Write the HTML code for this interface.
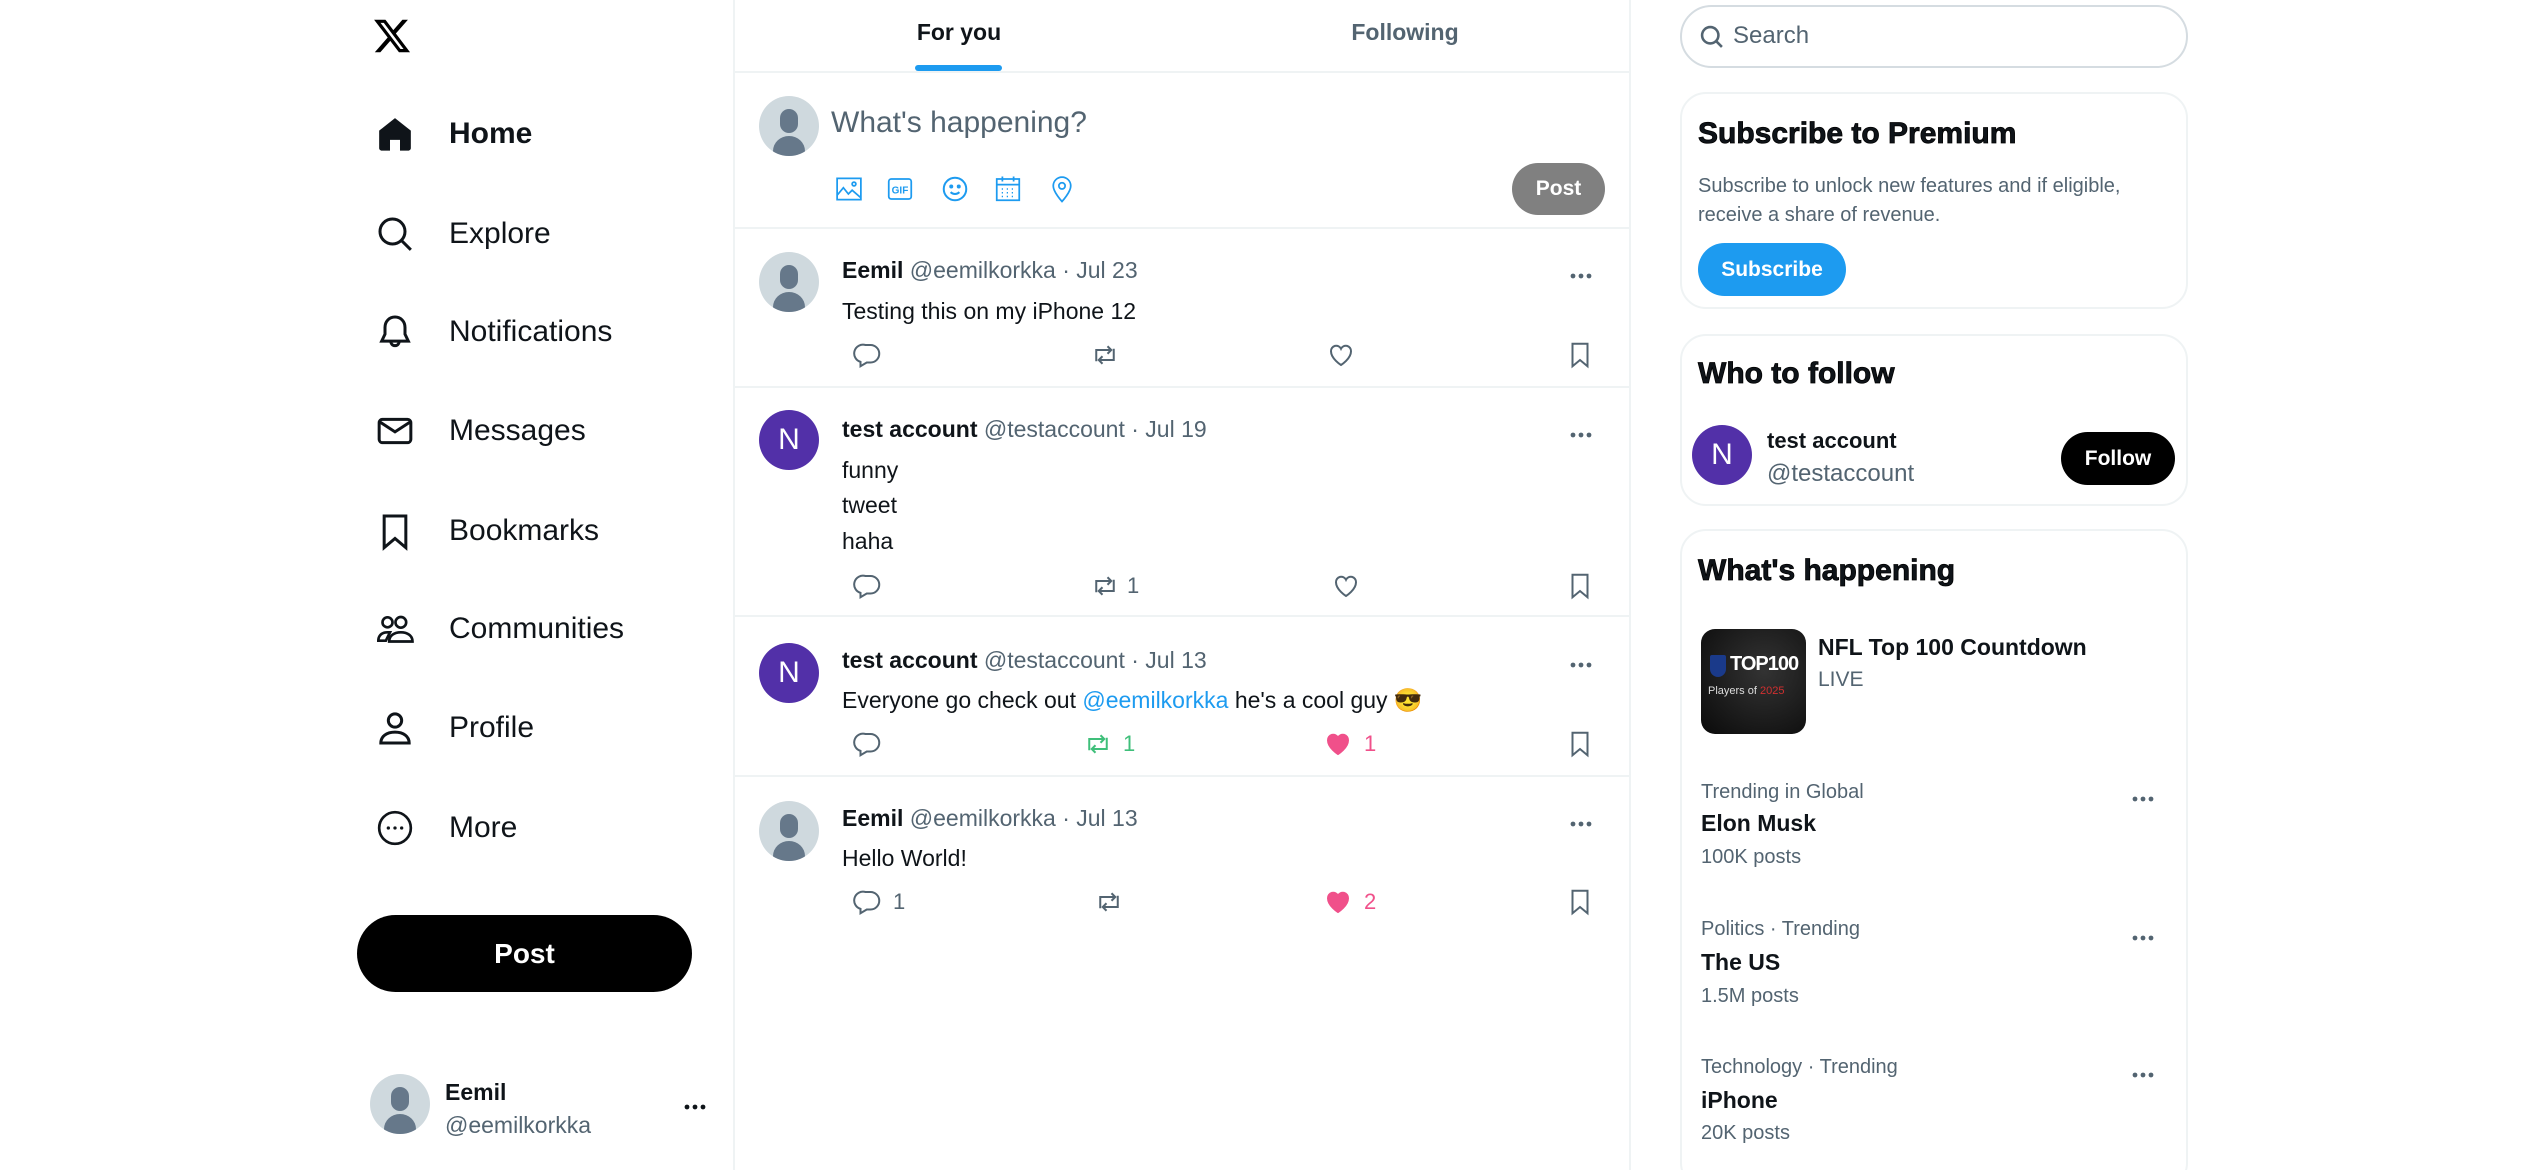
<!DOCTYPE html>
<html><head><meta charset="utf-8"><style>
*{margin:0;padding:0;box-sizing:border-box}
html{width:2530px;height:1170px;overflow:hidden}
body{width:2530px;height:1170px;background:#fff;font-family:"Liberation Sans",Arial,sans-serif;color:#0f1419;position:relative;overflow:hidden}
.a{position:absolute;white-space:nowrap}
.g{color:#536471}
.nav{position:absolute;left:449px;font-size:30px;line-height:30px}
.ni{position:absolute;left:375px;width:40px;height:40px}
.av{position:absolute;width:60px;height:60px;border-radius:50%;background:#cfd9de;overflow:hidden}
.av::before{content:"";position:absolute;left:21px;top:13px;width:18px;height:24px;border-radius:9px;background:#66788a}
.av::after{content:"";position:absolute;left:14px;top:40px;width:32px;height:30px;border-radius:50%;background:#66788a}
.avn{position:absolute;width:60px;height:60px;border-radius:50%;background:#5230a8;color:#fff;font-size:30px;line-height:60px;text-align:center}
.t{font-size:23px;line-height:24px}
.hl{position:absolute;left:734px;width:896px;height:2px;background:#eff3f4}
.card{position:absolute;left:1680px;width:508px;border:2px solid #eff3f4;border-radius:26px}
.h{font-size:30px;line-height:30px;font-weight:900;-webkit-text-stroke:0.8px #000}
.ic{position:absolute;width:30px;height:30px}
.d{position:absolute;width:24px;height:6px}
</style></head><body>

<svg width="0" height="0" style="position:absolute"><defs>
<g id="dt"><circle cx="4" cy="3" r="2.4"/><circle cx="12" cy="3" r="2.4"/><circle cx="20" cy="3" r="2.4"/></g>
<g id="rep"><path d="M10 4h4a7 7 0 010 14h-3l-5 3v-3.5A7 7 0 0110 4z" fill="none" stroke="currentColor" stroke-width="1.6"/></g>
<g id="rt" fill="none" stroke="currentColor" stroke-width="1.6"><path d="M5 17V8h12M14 5l3 3-3 3"/><path d="M19 7v9H7M10 19l-3-3 3-3"/></g>
<g id="lk"><path d="M12 20s-8-5-8-11a4.2 4.2 0 018-2 4.2 4.2 0 018 2c0 6-8 11-8 11z" stroke="currentColor" stroke-width="1.6"/></g>
<g id="bm"><path d="M6 3h12v18l-6-5-6 5z" fill="none" stroke="currentColor" stroke-width="1.6"/></g>
</defs></svg>

<!-- left sidebar -->
<svg class="a" style="left:372px;top:16px;width:40px;height:40px" viewBox="0 0 24 24"><path fill="#000" d="M18.244 2.25h3.308l-7.227 8.26 8.502 11.24H16.17l-5.214-6.817L4.99 21.75H1.68l7.73-8.835L1.254 2.25H8.08l4.713 6.231zm-1.161 17.52h1.833L7.084 4.126H5.117z"/></svg>

<svg class="ni" style="top:114px" viewBox="0 0 24 24"><path fill="#0f1419" d="M12 2.5 2.5 10v10.5c0 .8.7 1.5 1.5 1.5h5v-6.5h6V22h5c.8 0 1.5-.7 1.5-1.5V10z"/></svg>
<div class="nav" style="top:119px;font-weight:bold">Home</div>
<svg class="ni" style="top:214px" viewBox="0 0 24 24" fill="none" stroke="#0f1419" stroke-width="1.8"><circle cx="10.5" cy="10.5" r="7.5"/><path d="M16 16l5.5 5.5"/></svg>
<div class="nav" style="top:219px">Explore</div>
<svg class="ni" style="top:312px" viewBox="0 0 24 24" fill="none" stroke="#0f1419" stroke-width="1.8"><path d="M12 3c-3.5 0-6 2.7-6 6.3v4L4 17.5h16L18 13.3v-4C18 5.7 15.5 3 12 3z"/><path d="M9.5 17.5c0 1.6 1.1 2.7 2.5 2.7s2.5-1.1 2.5-2.7"/></svg>
<div class="nav" style="top:317px">Notifications</div>
<svg class="ni" style="top:411px" viewBox="0 0 24 24" fill="none" stroke="#0f1419" stroke-width="1.8"><rect x="2.5" y="5" width="19" height="14" rx="2"/><path d="M2.8 6.5 12 12.5l9.2-6"/></svg>
<div class="nav" style="top:416px">Messages</div>
<svg class="ni" style="top:511px" viewBox="0 0 24 24" fill="none" stroke="#0f1419" stroke-width="1.8"><path d="M5.5 3h13v19L12 16.5 5.5 22z"/></svg>
<div class="nav" style="top:516px">Bookmarks</div>
<svg class="ni" style="top:609px" viewBox="0 0 24 24" fill="none" stroke="#0f1419" stroke-width="1.6"><circle cx="7.5" cy="8" r="3"/><circle cx="15.5" cy="8" r="3.2"/><path d="M2 19c0-3 2-5 5.5-5H9l-2.5 5z"/><path d="M8.5 19.5c0-3.5 3-5.5 7-5.5s7 2 7 5.5z"/></svg>
<div class="nav" style="top:614px">Communities</div>
<svg class="ni" style="top:708px" viewBox="0 0 24 24" fill="none" stroke="#0f1419" stroke-width="1.8"><circle cx="12" cy="7.5" r="4"/><path d="M3.5 21c0-4 3.5-6.5 8.5-6.5s8.5 2.5 8.5 6.5z"/></svg>
<div class="nav" style="top:713px">Profile</div>
<svg class="ni" style="top:808px" viewBox="0 0 24 24" fill="none" stroke="#0f1419" stroke-width="1.6"><circle cx="12" cy="12" r="9.5"/><circle cx="8" cy="12" r="1" fill="#0f1419" stroke="none"/><circle cx="12" cy="12" r="1" fill="#0f1419" stroke="none"/><circle cx="16" cy="12" r="1" fill="#0f1419" stroke="none"/></svg>
<div class="nav" style="top:813px">More</div>

<div class="a" style="left:357px;top:915px;width:335px;height:77px;border-radius:39px;background:#000;color:#fff;font-size:28px;font-weight:bold;line-height:77px;text-align:center">Post</div>

<div class="av" style="left:370px;top:1074px"></div>
<div class="a t" style="left:445px;top:1080px;font-weight:bold">Eemil</div>
<div class="a t g" style="left:445px;top:1113px">@eemilkorkka</div>
<svg class="d" style="left:683px;top:1104px;fill:#0f1419" viewBox="0 0 24 6"><use href="#dt"/></svg>

<!-- center column -->
<div class="a" style="left:733px;top:0;width:2px;height:1170px;background:#eff3f4"></div>
<div class="a" style="left:1629px;top:0;width:2px;height:1170px;background:#eff3f4"></div>
<div class="a t" style="left:914px;top:20px;width:90px;text-align:center;font-weight:bold">For you</div>
<div class="a t g" style="left:1300px;top:20px;width:210px;text-align:center;font-weight:bold">Following</div>
<div class="a" style="left:915px;top:65px;width:87px;height:6px;border-radius:3px;background:#1d9bf0"></div>
<div class="hl" style="top:71px"></div>

<div class="av" style="left:759px;top:96px"></div>
<div class="a g" style="left:831px;top:108px;font-size:30px;line-height:30px">What's happening?</div>
<svg class="ic" style="left:834px;top:174px" viewBox="0 0 24 24" fill="none" stroke="#1d9bf0" stroke-width="1.4"><rect x="2.5" y="3.5" width="19" height="17"/><path d="M2.5 17l5-6 4 5 3-3 7 6"/><circle cx="16" cy="8" r="1.5"/></svg>
<svg class="ic" style="left:885px;top:174px" viewBox="0 0 24 24" fill="none" stroke="#1d9bf0" stroke-width="1.4"><rect x="3" y="4" width="18" height="16" rx="2"/><text x="12" y="15.5" font-size="8" font-family="Liberation Sans" text-anchor="middle" fill="#1d9bf0" stroke="none" font-weight="bold">GIF</text></svg>
<svg class="ic" style="left:940px;top:174px" viewBox="0 0 24 24" fill="none" stroke="#1d9bf0" stroke-width="1.6"><circle cx="12" cy="12" r="9"/><circle cx="9" cy="10" r="0.8" fill="#1d9bf0"/><circle cx="15" cy="10" r="0.8" fill="#1d9bf0"/><path d="M8.5 14.5c2 2 5 2 7 0"/></svg>
<svg class="ic" style="left:993px;top:174px" viewBox="0 0 24 24" fill="none" stroke="#1d9bf0" stroke-width="1.4"><rect x="3" y="4" width="18" height="17"/><path d="M3 8.5h18M7.5 2v4M16.5 2v4"/><path d="M7 12h1M11 12h1M15 12h1M7 15h1M11 15h1M15 15h1M7 18h1M11 18h1M15 18h1" stroke-width="1.2"/></svg>
<svg class="ic" style="left:1047px;top:174px" viewBox="0 0 24 24" fill="none" stroke="#1d9bf0" stroke-width="1.4"><path d="M12 22s-7-7.5-7-12.5a7 7 0 0114 0C19 14.5 12 22 12 22z"/><circle cx="12" cy="9.5" r="2.5"/></svg>
<div class="a" style="left:1512px;top:163px;width:93px;height:52px;border-radius:26px;background:#808080;color:#fff;font-size:21px;font-weight:bold;line-height:52px;text-align:center">Post</div>
<div class="hl" style="top:227px"></div>

<!-- tweet1 -->
<div class="av" style="left:759px;top:252px"></div>
<div class="a t" style="left:842px;top:258px"><b>Eemil</b> <span class="g">@eemilkorkka · Jul 23</span></div>
<svg class="d" style="left:1569px;top:273px;fill:#536471" viewBox="0 0 24 6"><use href="#dt"/></svg>
<div class="a t" style="left:842px;top:299px">Testing this on my iPhone 12</div>
<div class="hl" style="top:386px"></div>
<!-- tweet2 -->
<div class="avn" style="left:759px;top:410px">N</div>
<div class="a t" style="left:842px;top:417px"><b>test account</b> <span class="g">@testaccount · Jul 19</span></div>
<svg class="d" style="left:1569px;top:432px;fill:#536471" viewBox="0 0 24 6"><use href="#dt"/></svg>
<div class="a t" style="left:842px;top:458px">funny</div>
<div class="a t" style="left:842px;top:493px">tweet</div>
<div class="a t" style="left:842px;top:529px">haha</div>
<div class="hl" style="top:615px"></div>
<!-- tweet3 -->
<div class="avn" style="left:759px;top:643px">N</div>
<div class="a t" style="left:842px;top:648px"><b>test account</b> <span class="g">@testaccount · Jul 13</span></div>
<svg class="d" style="left:1569px;top:662px;fill:#536471" viewBox="0 0 24 6"><use href="#dt"/></svg>
<div class="a t" style="left:842px;top:688px">Everyone go check out <span style="color:#1d9bf0">@eemilkorkka</span> he's a cool guy 😎</div>
<div class="hl" style="top:775px"></div>
<!-- tweet4 -->
<div class="av" style="left:759px;top:801px"></div>
<div class="a t" style="left:842px;top:806px"><b>Eemil</b> <span class="g">@eemilkorkka · Jul 13</span></div>
<svg class="d" style="left:1569px;top:821px;fill:#536471" viewBox="0 0 24 6"><use href="#dt"/></svg>
<div class="a t" style="left:842px;top:846px">Hello World!</div>

<!-- action rows -->
<svg class="ic" style="left:853px;top:340px;color:#536471" viewBox="0 0 24 24"><use href="#rep"/></svg>
<svg class="ic" style="left:1090px;top:340px;color:#536471" viewBox="0 0 24 24"><use href="#rt"/></svg>
<svg class="ic" style="left:1326px;top:340px;color:#536471" viewBox="0 0 24 24"><use href="#lk" fill="none"/></svg>
<svg class="ic" style="left:1565px;top:340px;color:#536471" viewBox="0 0 24 24"><use href="#bm"/></svg>

<svg class="ic" style="left:853px;top:571px;color:#536471" viewBox="0 0 24 24"><use href="#rep"/></svg>
<svg class="ic" style="left:1090px;top:571px;color:#536471" viewBox="0 0 24 24"><use href="#rt"/></svg>
<div class="a g" style="left:1127px;top:575px;font-size:22px;line-height:22px">1</div>
<svg class="ic" style="left:1331px;top:571px;color:#536471" viewBox="0 0 24 24"><use href="#lk" fill="none"/></svg>
<svg class="ic" style="left:1565px;top:571px;color:#536471" viewBox="0 0 24 24"><use href="#bm"/></svg>

<svg class="ic" style="left:853px;top:729px;color:#536471" viewBox="0 0 24 24"><use href="#rep"/></svg>
<svg class="ic" style="left:1083px;top:729px;color:#3fbf7a" viewBox="0 0 24 24"><use href="#rt"/></svg>
<div class="a" style="left:1123px;top:733px;font-size:22px;line-height:22px;color:#3fbf7a">1</div>
<svg class="ic" style="left:1323px;top:729px;color:#f0508a" viewBox="0 0 24 24"><use href="#lk" fill="#f0508a"/></svg>
<div class="a" style="left:1364px;top:733px;font-size:22px;line-height:22px;color:#f0508a">1</div>
<svg class="ic" style="left:1565px;top:729px;color:#536471" viewBox="0 0 24 24"><use href="#bm"/></svg>

<svg class="ic" style="left:853px;top:887px;color:#536471" viewBox="0 0 24 24"><use href="#rep"/></svg>
<div class="a g" style="left:893px;top:891px;font-size:22px;line-height:22px">1</div>
<svg class="ic" style="left:1094px;top:887px;color:#536471" viewBox="0 0 24 24"><use href="#rt"/></svg>
<svg class="ic" style="left:1323px;top:887px;color:#f0508a" viewBox="0 0 24 24"><use href="#lk" fill="#f0508a"/></svg>
<div class="a" style="left:1364px;top:891px;font-size:22px;line-height:22px;color:#f0508a">2</div>
<svg class="ic" style="left:1565px;top:887px;color:#536471" viewBox="0 0 24 24"><use href="#bm"/></svg>

<!-- right column -->
<div class="a" style="left:1680px;top:5px;width:508px;height:63px;border:2px solid #d5dce1;border-radius:32px"></div>
<svg class="a" style="left:1698px;top:23px;width:28px;height:28px" viewBox="0 0 24 24" fill="none" stroke="#536471" stroke-width="2.2"><circle cx="10.5" cy="10.5" r="7"/><path d="M15.5 15.5l5 5"/></svg>
<div class="a g" style="left:1733px;top:24px;font-size:24px;line-height:24px">Search</div>

<div class="card" style="top:92px;height:217px"></div>
<div class="a h" style="left:1698px;top:119px">Subscribe to Premium</div>
<div class="a g" style="left:1698px;top:176px;font-size:20px;line-height:20px">Subscribe to unlock new features and if eligible,</div>
<div class="a g" style="left:1698px;top:205px;font-size:20px;line-height:20px">receive a share of revenue.</div>
<div class="a" style="left:1698px;top:243px;width:148px;height:53px;border-radius:27px;background:#1d9bf0;color:#fff;font-weight:bold;font-size:21px;line-height:53px;text-align:center">Subscribe</div>

<div class="card" style="top:334px;height:172px"></div>
<div class="a h" style="left:1698px;top:359px">Who to follow</div>
<div class="avn" style="left:1692px;top:425px">N</div>
<div class="a t" style="left:1767px;top:429px;font-weight:bold;font-size:22px">test account</div>
<div class="a g" style="left:1767px;top:462px;font-size:24px;line-height:24px">@testaccount</div>
<div class="a" style="left:2061px;top:432px;width:114px;height:53px;border-radius:27px;background:#000;color:#fff;font-weight:bold;font-size:21px;line-height:53px;text-align:center">Follow</div>

<div class="card" style="top:529px;height:660px"></div>
<div class="a h" style="left:1698px;top:556px">What's happening</div>
<div class="a" style="left:1701px;top:629px;width:105px;height:105px;border-radius:14px;background:radial-gradient(circle at 60% 40%,#333,#0a0a0a)"></div>
<div class="a" style="left:1710px;top:655px;width:16px;height:22px;background:#1a3a8a;border-radius:2px 2px 8px 8px"></div>
<div class="a" style="left:1730px;top:654px;color:#fff;font-weight:bold;font-size:20px;line-height:20px;letter-spacing:-1px">TOP100</div>
<div class="a" style="left:1708px;top:686px;color:#ddd;font-size:11px;line-height:11px">Players of <span style="color:#d03030">2025</span></div>
<div class="a t" style="left:1818px;top:635px;font-weight:bold">NFL Top 100 Countdown</div>
<div class="a g" style="left:1818px;top:669px;font-size:21px;line-height:21px">LIVE</div>

<div class="a g" style="left:1701px;top:782px;font-size:20px;line-height:20px">Trending in Global</div>
<div class="a t" style="left:1701px;top:811px;font-weight:bold">Elon Musk</div>
<div class="a g" style="left:1701px;top:847px;font-size:20px;line-height:20px">100K posts</div>
<svg class="d" style="left:2131px;top:796px;fill:#536471" viewBox="0 0 24 6"><use href="#dt"/></svg>

<div class="a g" style="left:1701px;top:919px;font-size:20px;line-height:20px">Politics · Trending</div>
<div class="a t" style="left:1701px;top:950px;font-weight:bold">The US</div>
<div class="a g" style="left:1701px;top:986px;font-size:20px;line-height:20px">1.5M posts</div>
<svg class="d" style="left:2131px;top:935px;fill:#536471" viewBox="0 0 24 6"><use href="#dt"/></svg>

<div class="a g" style="left:1701px;top:1057px;font-size:20px;line-height:20px">Technology · Trending</div>
<div class="a t" style="left:1701px;top:1088px;font-weight:bold">iPhone</div>
<div class="a g" style="left:1701px;top:1123px;font-size:20px;line-height:20px">20K posts</div>
<svg class="d" style="left:2131px;top:1072px;fill:#536471" viewBox="0 0 24 6"><use href="#dt"/></svg>

</body></html>
